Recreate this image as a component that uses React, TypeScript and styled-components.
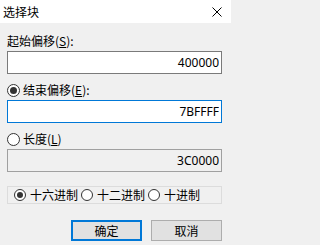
import React from "react";
import styled, { createGlobalStyle, css } from "styled-components";

const GlobalStyle = createGlobalStyle`
  html, body {
    margin: 0;
    padding: 0;
    background: #f0f0f0;
  }
  body {
    width: 231px;
    height: 245px;
    overflow: hidden;
    font-family: "Noto Sans CJK SC", "Noto Sans", sans-serif;
    font-size: 12px;
    color: #000;
  }
  * { box-sizing: border-box; }
`;

const Window = styled.div`
  width: 231px;
  height: 245px;
  display: flex;
  flex-direction: column;
  background: #f0f0f0;
`;

const TitleBar = styled.div`
  height: 23px;
  background: #ffffff;
  display: flex;
  align-items: center;
  justify-content: space-between;
  padding: 0 9px 0 3px;
`;

const Title = styled.span`
  font-size: 12px;
  line-height: 14px;
`;

const CloseButton = styled.span`
  width: 10px;
  height: 10px;
  display: flex;
`;

const Body = styled.div`
  display: flex;
  flex-direction: column;
  padding: 10px 9px 0 7px;
`;

const FieldLabel = styled.div<{ $first?: boolean }>`
  height: 16px;
  line-height: 16px;
  display: flex;
  align-items: center;
  gap: 3px;
  margin-top: ${(p) => (p.$first ? "0" : "8px")};
  white-space: nowrap;
`;

const Key = styled.u`
  text-decoration: underline;
  text-underline-offset: 1px;
`;

const Edit = styled.input<{ $state?: "normal" | "focus" | "disabled" }>`
  display: block;
  width: 100%;
  height: 23px;
  margin: 2px 0 0 0;
  padding: 0 2px;
  font-family: "Noto Sans", "Segoe UI", sans-serif;
  font-size: 12px;
  text-align: right;
  color: #000;
  background: #ffffff;
  border: 1px solid #7a7a7a;
  border-radius: 0;
  outline: none;
  ${(p) =>
    p.$state === "focus" &&
    css`
      border-color: #0078d7;
    `}
  ${(p) =>
    p.$state === "disabled" &&
    css`
      background: #f0f0f0;
      border-color: #a0a0a0;
    `}
`;

const Radio = styled.span<{ $checked?: boolean; $size?: number }>`
  flex: none;
  width: ${(p) => p.$size ?? 13}px;
  height: ${(p) => p.$size ?? 13}px;
  border-radius: 50%;
  border: 1px solid #333333;
  background: #ffffff;
  display: flex;
  align-items: center;
  justify-content: center;
  &::after {
    content: "";
    display: ${(p) => (p.$checked ? "block" : "none")};
    width: ${(p) => ((p.$size ?? 13) >= 13 ? 7 : 6)}px;
    height: ${(p) => ((p.$size ?? 13) >= 13 ? 7 : 6)}px;
    border-radius: 50%;
    background: #333333;
  }
`;

const Group = styled.div`
  margin-top: 14px;
  height: 18px;
  border: 1px solid #dcdcdc;
  display: flex;
  align-items: center;
  padding-left: 6px;
`;

const GroupOption = styled.label`
  display: flex;
  align-items: center;
  gap: 4px;
  margin-right: 3px;
  line-height: 16px;
  white-space: nowrap;
`;

const ButtonRow = styled.div`
  margin-top: 16px;
  display: flex;
  justify-content: flex-end;
  gap: 9px;
`;

const Button = styled.button<{ $default?: boolean }>`
  width: 71px;
  height: 21px;
  padding: 0;
  font-family: "Noto Sans CJK SC", sans-serif;
  font-size: 12px;
  color: #000;
  background: #e1e1e1;
  border: 1px solid #adadad;
  border-radius: 0;
  ${(p) =>
    p.$default &&
    css`
      border: 2px solid #0078d7;
    `}
`;

export default function App() {
  return (
    <Window>
      <GlobalStyle />
      <TitleBar>
        <Title>选择块</Title>
        <CloseButton>
          <svg width="10" height="10" viewBox="0 0 10 10">
            <path d="M0.5 0.5 L9.5 9.5 M9.5 0.5 L0.5 9.5" stroke="#000" strokeWidth="1" />
          </svg>
        </CloseButton>
      </TitleBar>
      <Body>
        <FieldLabel $first>
          <span>
            起始偏移(<Key>S</Key>):
          </span>
        </FieldLabel>
        <Edit readOnly defaultValue="400000" />

        <FieldLabel>
          <Radio $checked />
          <span>
            结束偏移(<Key>E</Key>):
          </span>
        </FieldLabel>
        <Edit readOnly $state="focus" defaultValue="7BFFFF" />

        <FieldLabel>
          <Radio />
          <span>
            长度(<Key>L</Key>)
          </span>
        </FieldLabel>
        <Edit readOnly $state="disabled" defaultValue="3C0000" />

        <Group>
          <GroupOption>
            <Radio $checked $size={12} />
            十六进制
          </GroupOption>
          <GroupOption>
            <Radio $size={12} />
            十二进制
          </GroupOption>
          <GroupOption>
            <Radio $size={12} />
            十进制
          </GroupOption>
        </Group>

        <ButtonRow>
          <Button $default>确定</Button>
          <Button>取消</Button>
        </ButtonRow>
      </Body>
    </Window>
  );
}
